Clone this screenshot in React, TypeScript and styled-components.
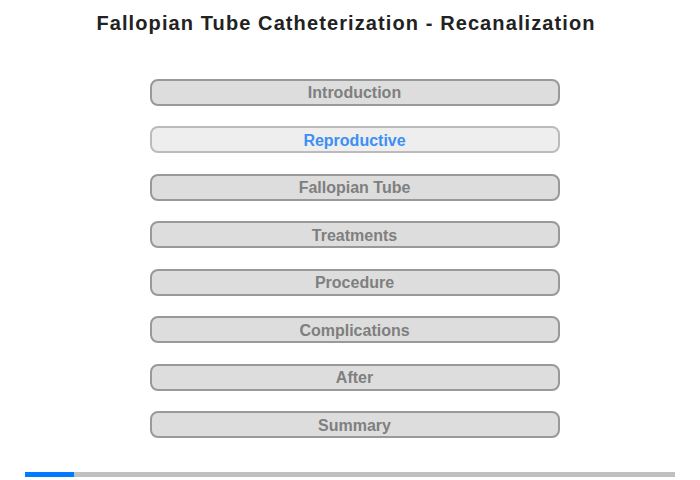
import styled, { createGlobalStyle } from "styled-components";

const GlobalStyle = createGlobalStyle`
  body {
    margin: 0;
    background: #ffffff;
    font-family: "Liberation Sans", Arial, sans-serif;
  }
`;

const sections = [
  "Introduction",
  "Reproductive",
  "Fallopian Tube",
  "Treatments",
  "Procedure",
  "Complications",
  "After",
  "Summary",
];

const activeIndex = 1;
const progress = 49 / 650;

export default function App() {
  return (
    <Page>
      <GlobalStyle />
      <Title>Fallopian Tube Catheterization - Recanalization</Title>
      <Menu>
        {sections.map((name, i) => (
          <MenuButton key={name} $active={i === activeIndex}>
            {name}
          </MenuButton>
        ))}
      </Menu>
      <ProgressTrack>
        <ProgressFill style={{ width: `${progress * 100}%` }} />
      </ProgressTrack>
    </Page>
  );
}

const Page = styled.div`
  width: 700px;
  height: 480px;
  display: flex;
  flex-direction: column;
  align-items: center;
  box-sizing: border-box;
  padding-top: 12px;
`;

const Title = styled.h1`
  margin: 0 8px 0 0;
  font-size: 20px;
  line-height: 23px;
  font-weight: 700;
  letter-spacing: 1.1px;
  color: #222222;
`;

const Menu = styled.nav`
  display: flex;
  flex-direction: column;
  gap: 20.5px;
  margin: 43.5px 0 0 9px;
`;

const MenuButton = styled.div<{ $active: boolean }>`
  width: 410px;
  height: 27px;
  box-sizing: border-box;
  padding-top: 2px;
  border: 2px solid ${(p) => (p.$active ? "#bbbbbb" : "#999999")};
  border-radius: 8px;
  background: ${(p) => (p.$active ? "#eeeeee" : "#dddddd")};
  color: ${(p) => (p.$active ? "#3d8ff5" : "#7f7f7f")};
  font-size: 16px;
  font-weight: 700;
  display: flex;
  align-items: center;
  justify-content: center;
  cursor: pointer;
`;

const ProgressTrack = styled.div`
  margin-top: auto;
  margin-bottom: 3px;
  width: 650px;
  height: 5px;
  background: #c0c0c0;
`;

const ProgressFill = styled.div`
  height: 100%;
  background: #007bff;
`;
